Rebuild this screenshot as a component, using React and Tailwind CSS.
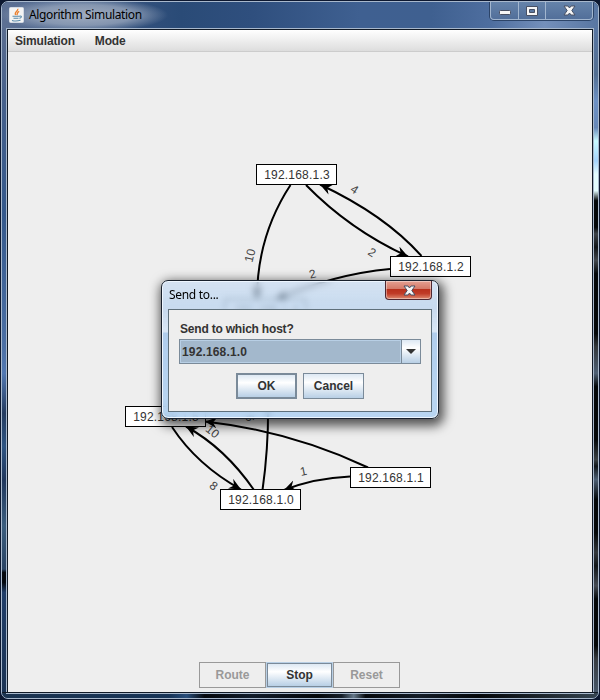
const nodes = [
  { x: 248, y: 112, ip: '192.168.1.3' },
  { x: 382, y: 204, ip: '192.168.1.2' },
  { x: 217, y: 247, ip: '192.168.1.4' },
  { x: 117, y: 354, ip: '192.168.1.5' },
  { x: 212, y: 437, ip: '192.168.1.0' },
  { x: 342, y: 415, ip: '192.168.1.1' },
];

const edges = [
  'M290.5 185 Q257 236 257 299',
  'M306 185 Q350 230 408 256.5',
  'M421.5 256 Q385 215 320 184.5',
  'M390 269 Q335 274 276 299',
  'M262.5 490 Q274 410 262 320',
  'M368 467.5 Q290 431 205 421.5',
  'M350 476.5 Q315 478 284 490',
  'M254 490 Q225 448 186 426.5',
  'M172 427 Q197 465 241 489.5',
];

const labels = [
  { x: 250, y: 255.5, r: -76, t: '10' },
  { x: 354.5, y: 189.5, r: 33, t: '4' },
  { x: 372, y: 252.5, r: 33, t: '2' },
  { x: 312.5, y: 274, r: -14, t: '2' },
  { x: 250, y: 418, r: 82, t: '6' },
  { x: 212.5, y: 431.5, r: 38, t: '10' },
  { x: 213.5, y: 486, r: 38, t: '8' },
  { x: 303.5, y: 471.5, r: -12, t: '1' },
];

function Glyph({ className }) {
  return (
    <svg className={className} width="13" height="11" viewBox="0 0 13 11">
      <path d="M1 1h4l1.5 2L8 1h4L8.8 5.5 12 10H8L6.5 8 5 10H1l3.2-4.5z" fill="#f6f6f6" stroke="#485064" />
    </svg>
  );
}

function JavaIcon() {
  return (
    <svg width="15" height="16" viewBox="0 0 15 16">
      <rect x=".5" y=".5" width="14" height="15" rx="1" fill="#f4f4f4" stroke="#d3dae4" />
      <path d="M8.8 1.8C9.6 4 4.8 4.8 6.6 8M10.2 4.4C7.6 5.5 8.8 6.6 7.8 8.2" fill="none" stroke="#ec8130" strokeWidth="1.3" />
      <path d="M3.5 9.3h7M4.5 11.2h5M3 13.5q4 1.2 8.5-.2M10.5 9.2c3-.8 2 2-.2 2" fill="none" stroke="#5889a9" strokeWidth="1.1" />
    </svg>
  );
}

function Diagram() {
  return (
    <div className="absolute inset-0">
      <svg className="absolute inset-0" width="584" height="640" viewBox="8 52 584 640">
        <defs>
          <marker id="head" markerUnits="userSpaceOnUse" markerWidth="14" markerHeight="12" refX="12" refY="5.5" orient="auto">
            <path d="M0 0 12 5.5 0 11 4 5.5z" />
          </marker>
        </defs>
        {edges.map((d) => (
          <path key={d} d={d} fill="none" stroke="#000" strokeWidth="2" markerEnd="url(#head)" />
        ))}
        {labels.map((l, i) => (
          <text key={i} transform={`translate(${l.x} ${l.y}) rotate(${l.r})`} y="4" textAnchor="middle" fontSize="12" fill="#444">
            {l.t}
          </text>
        ))}
      </svg>
      {nodes.map((n) => (
        <div
          key={n.ip}
          className="absolute flex h-[21px] w-[81px] items-center justify-center border border-black bg-white pl-px text-[12px] leading-none tracking-[0.2px] text-[#333]"
          style={{ left: n.x, top: n.y }}
        >
          {n.ip}
        </div>
      ))}
    </div>
  );
}

function Dialog() {
  return (
    <div className="absolute left-[153px] top-[228px] h-[139px] w-[278px] rounded-[7px] shadow-[2px_4px_11px_3px_rgba(0,0,0,0.65)]">
      <div className="flex h-full flex-col overflow-hidden rounded-[7px] border border-[#18202c] bg-[linear-gradient(#c9dcf3b0_0px,#b5d2f0a8_24px,#bdd4eec0_30px,#d9e7f6_51px,#b0cdec_52px,#acd0f2cc_100%)] px-[6px] pb-[6px] shadow-[inset_0_0_0_1px_#eef6ff] backdrop-blur-[3px]">
        <div className="flex h-[28px] shrink-0 items-start justify-between pl-px">
          <span className="mt-[6px] font-['Noto_Sans'] text-[12px] leading-4 tracking-[-0.3px] text-black">Send to...</span>
          <div className="flex h-[19px] w-[47px] items-center justify-center rounded-b-[4px] border border-t-0 border-[#4e2730] bg-[linear-gradient(#e5a092_0%,#d47968_44%,#b9301c_46%,#c03c28_70%,#df8a70_100%)] shadow-[inset_0_0_0_1px_#ffffff66]">
            <Glyph className="ml-px" />
          </div>
        </div>
        <div className="flex flex-1 flex-col border border-[#5f707b] bg-[#eee] px-[10px] pt-[11px]">
          <div className="h-[17px] pl-px text-[12px] leading-[16px] font-bold tracking-[-0.2px] text-[#333]">Send to which host?</div>
          <div className="mt-px flex h-[25px] w-[242px] shrink-0 border border-[#7a8a99]">
            <div className="flex flex-1 items-center border border-[#b8cfe5] bg-[#a3b8cc] pl-px text-[12px] leading-none font-bold tracking-[0.15px] text-[#333]">192.168.1.0</div>
            <div className="flex w-[19px] items-center justify-center border-l border-[#7a8a99] bg-[linear-gradient(#dde8f3,#fff_35%,#b8cfe5)]">
              <svg width="10" height="5" viewBox="0 0 10 5"><path d="M0 0h10L5 5z" fill="#333" /></svg>
            </div>
          </div>
          <div className="mt-[9px] flex gap-[6px] pl-[57px]">
            <div className="flex h-[26px] w-[61px] items-center justify-center border-2 border-[#7a8a99] bg-[linear-gradient(#dde8f3,#fff_35%,#b8cfe5)] text-[12px] font-bold text-[#333]">OK</div>
            <div className="flex h-[26px] w-[61px] items-center justify-center border border-[#7a8a99] bg-[linear-gradient(#dde8f3,#fff_35%,#b8cfe5)] text-[12px] font-bold text-[#333]">Cancel</div>
          </div>
        </div>
      </div>
    </div>
  );
}

function WindowControls() {
  return (
    <div className="mr-[5px] flex h-[18px] w-[103px] rounded-b-[4px] border border-t-0 border-[#a2b6cf] bg-[linear-gradient(#6583aa,#526f9a)] shadow-[0_0_0_1px_#2c4468]">
      <div className="flex w-[28px] items-center justify-center border-r border-[#a2b6cf]">
        <svg className="mt-1" width="12" height="6"><rect x=".5" y=".5" width="11" height="4" rx="1" fill="#f6f6f6" stroke="#485064" /></svg>
      </div>
      <div className="flex w-[27px] items-center justify-center border-r border-[#a2b6cf]">
        <svg width="12" height="10"><path d="M.5.5h11v9H.5zM3.5 3.5v3h5v-3z" fillRule="evenodd" fill="#f6f6f6" stroke="#485064" /></svg>
      </div>
      <div className="flex flex-1 items-center justify-center"><Glyph /></div>
    </div>
  );
}

const LEFT_FRAME =
  'w-[6px] shrink-0 bg-[linear-gradient(#5a6d90_0%,#47618c_10%,#35598c_28%,#4c70a5_48%,#5278b2_52%,#253c60_58%,#2f5583_63%,#20375d_68%,#3c5e7e_75%,#2b4566_81%,#2b4566_81%,#2b4566_81.5%,#05090f_82%,#05090f_83.5%,#213e69_85%,#1b3354_100%)]';
const RIGHT_FRAME =
  'w-[6px] shrink-0 bg-[linear-gradient(#5876a2_0%,#526e91_7%,#6d91c4_11%,#6788b8_15%,#c8faff_17%,#a5d3fb_20%,#e4fdff_22%,#e4fdff_24.5%,#030709_26%,#030709_30%,#3c4248_31%,#101418_33%,#43484e_35%,#030709_37%,#030709_46%,#33383c_48%,#4e6074_52%,#030709_54%,#030709_62%,#3b4144_65%,#10161a_66%,#4e6074_68%,#030709_71%,#030709_76%,#33383c_79%,#101518_81%,#454b54_84%,#030709_86%,#030709_93%,#363b40_95%,#48586a_100%)]';

export default function App() {
  return (
    <div className="h-[700px] w-[600px] overflow-hidden bg-[#0d1830] p-px font-['Liberation_Sans',Arial,sans-serif]">
      <div className="flex h-[698px] w-[598px] flex-col overflow-hidden rounded-[7px] border border-[#a8b8cc] bg-[#263f64]">
        <div className="flex h-[26px] shrink-0 items-start justify-between bg-[radial-gradient(ellipse_84px_17px_at_82px_13px,#a0acbf_0%,#93a2b9d0_60%,#93a2b900_100%),linear-gradient(90deg,#5d7093_0%,#4c668f_10%,#33517d_22%,#2a4b77_30%,#2f4f7e_42%,#3f6091_60%,#3f6090_72%,#4e6e9f_82%,#7490bb_91%,#5876a2_100%)]">
          <div className="flex items-center pt-[5px] pl-[7px]">
            <JavaIcon />
            <span className="ml-[5px] font-['Noto_Sans'] text-[12px] leading-[16px] tracking-[-0.35px] text-black">Algorithm Simulation</span>
          </div>
          <WindowControls />
        </div>
        <div className="flex min-h-0 flex-1">
          <div className={LEFT_FRAME} />
          <div className="relative -mx-[2px] flex min-w-0 flex-1 flex-col border border-b-0 border-[#a8b8cc]">
            <div className="flex flex-1 flex-col border border-b-0 border-[#111a26] bg-[#eee]">
              <div className="flex h-[22px] shrink-0 items-center gap-[20px] border-b border-b-[#ccc] bg-[linear-gradient(#fff,#ddd)] pl-[7px] text-[12px] font-bold tracking-[-0.15px] text-[#333]">
                <span>Simulation</span>
                <span>Mode</span>
              </div>
              <div className="relative flex flex-1 flex-col justify-end">
                <Diagram />
                <div className="relative mr-px mb-[4px] flex justify-center text-[12px] font-bold">
                  <div className="flex h-[26px] w-[67px] items-center justify-center border border-[#999] text-[#999]">Route</div>
                  <div className="flex h-[26px] w-[67px] items-center justify-center border border-[#b8cfe5] bg-[#7a8a99] p-px text-[#333]">
                    <span className="flex h-full w-full items-center justify-center bg-[linear-gradient(#dde8f3,#fff_35%,#b8cfe5)]">Stop</span>
                  </div>
                  <div className="flex h-[26px] w-[67px] items-center justify-center border border-[#999] text-[#999]">Reset</div>
                </div>
                <Dialog />
              </div>
            </div>
          </div>
          <div className={RIGHT_FRAME} />
        </div>
        <div className="flex h-[6px] shrink-0 flex-col border-t border-[#111a26] bg-[linear-gradient(90deg,#1c3450_0%,#173457_28%,#294e7b_31%,#05080d_34%,#111c2b_42%,#04070a_53%,#151e29_57%,#65788a_59%,#06090c_61%,#131c27_70%,#04070a_80%,#1c242b_90%,#354450_100%)]">
          <div className="mx-[4px] h-px shrink-0 bg-[#a8b8cc]" />
        </div>
      </div>
    </div>
  );
}
